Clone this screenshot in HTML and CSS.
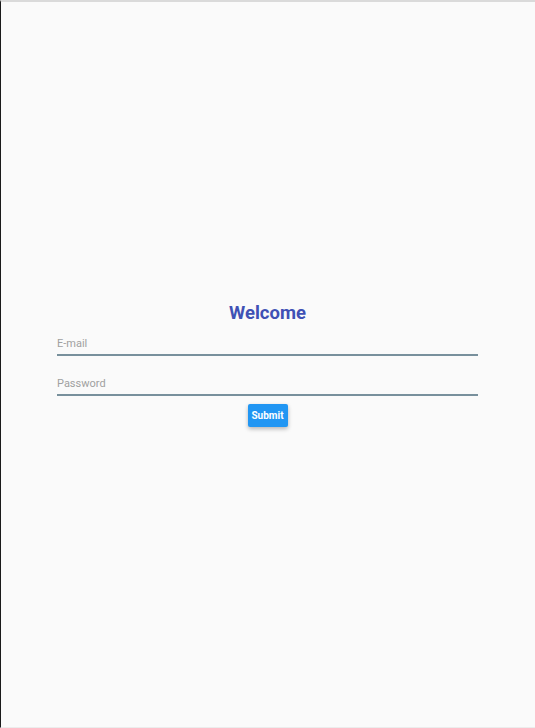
FILE: index.html
```html
<!DOCTYPE html>
<html lang="en">
<head>
<meta charset="utf-8">
<title>Welcome</title>
<link rel="stylesheet" href="styles.css">
</head>
<body>
<main class="page">
  <form class="login">
    <h1 class="login-title">Welcome</h1>
    <input class="field" type="email" placeholder="E-mail">
    <input class="field field-password" type="password" placeholder="Password">
    <button class="submit" type="button">Submit</button>
  </form>
</main>
</body>
</html>
```
FILE: styles.css
```css
html, body {
  margin: 0;
  padding: 0;
  height: 100%;
}

body {
  background: #fafafa;
  font-family: Roboto, "Liberation Sans", sans-serif;
}

.page {
  box-sizing: border-box;
  height: 100vh;
  border-left: 1px solid #1a1a1a;
  border-top: 2px solid #dadada;
  border-bottom: 1px solid #ececec;
  display: flex;
  align-items: center;
  justify-content: center;
}

.login {
  width: 421px;
  display: flex;
  flex-direction: column;
  align-items: center;
  margin: 0 0 2px -1px;
}

.login-title {
  margin: 0 0 9px;
  font-size: 18.5px;
  line-height: 24px;
  font-weight: 700;
  color: #3f51b5;
}

.field {
  display: block;
  box-sizing: content-box;
  width: 100%;
  height: 20px;
  margin: 0;
  padding: 0;
  border: none;
  border-bottom: 2px solid #78909c;
  background: transparent;
  font-family: Roboto, "Liberation Sans", sans-serif;
  font-size: 11px;
  color: #333;
  outline: none;
}

.field::placeholder {
  color: #a0a0a0;
}

.field-password {
  margin-top: 18px;
}

.submit {
  margin-top: 8px;
  width: 40px;
  height: 23px;
  padding: 0;
  border: none;
  border-radius: 2px;
  background: #2196f3;
  color: #fff;
  font-family: Roboto, "Liberation Sans", sans-serif;
  font-size: 10px;
  font-weight: 700;
  box-shadow: 0 2px 4px rgba(0, 0, 0, 0.28);
  cursor: pointer;
}
```
